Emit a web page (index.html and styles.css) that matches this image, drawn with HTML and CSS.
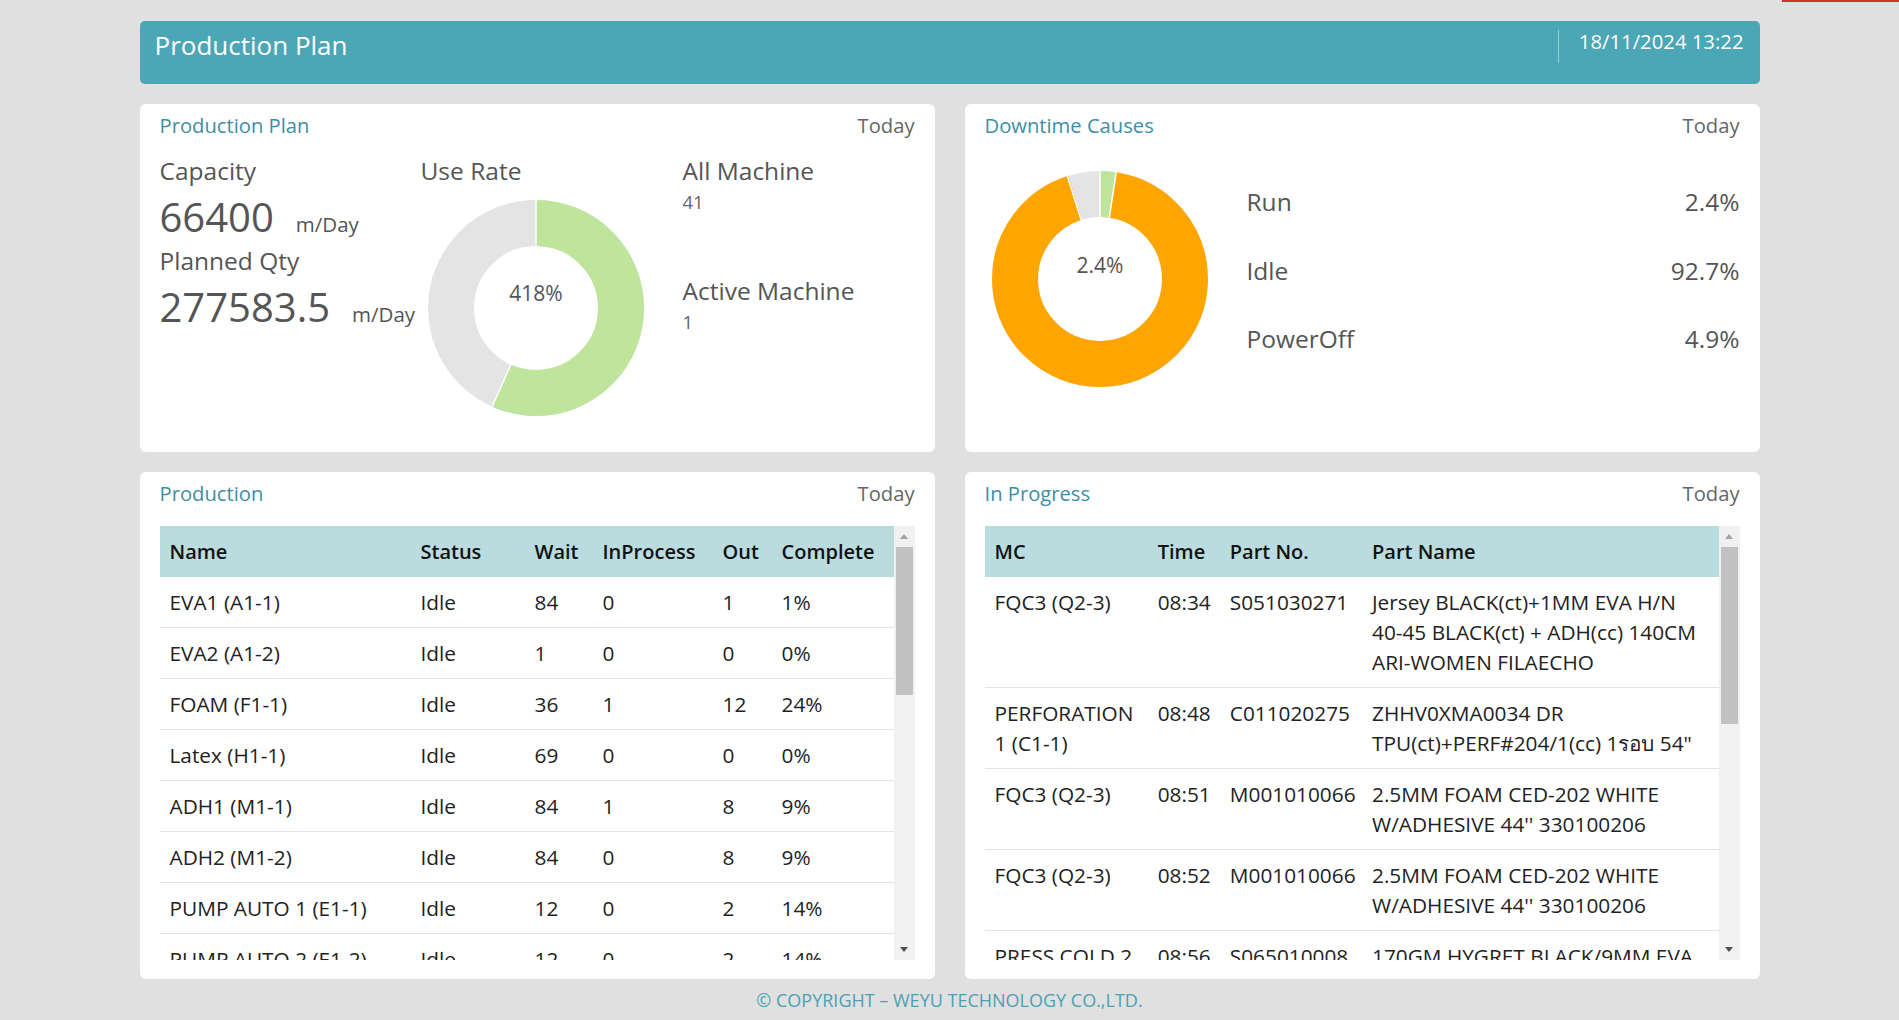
FILE: index.html
```html
<!DOCTYPE html>
<html lang="en">
<head>
<meta charset="utf-8">
<title>Production Plan</title>
<link rel="stylesheet" href="styles.css">
</head>
<body>
<div class="loadbar"></div>
<div class="page">
  <header class="topbar">
    <div class="topbar-title">Production Plan</div>
    <div class="topbar-date">18/11/2024 13:22</div>
  </header>

  <main class="grid">
    <section class="card card-top">
      <div class="card-head">
        <span class="card-title">Production Plan</span>
        <span class="card-when">Today</span>
      </div>
      <div class="plan-body">
        <div class="plan-col">
          <div class="label">Capacity</div>
          <div class="bignum">66400<span class="unit">m/Day</span></div>
          <div class="label">Planned Qty</div>
          <div class="bignum">277583.5<span class="unit">m/Day</span></div>
        </div>
        <div class="plan-col">
          <div class="label">Use Rate</div>
          <svg class="donut donut-use" width="220" height="220" viewBox="0 0 220 220">
            <circle cx="110" cy="110" r="85" fill="none" stroke="#e4e4e4" stroke-width="46"/>
            <circle cx="110" cy="110" r="85" fill="none" stroke="#bfe49b" stroke-width="46" stroke-dasharray="302.6 534.07" transform="rotate(-90 110 110)"/>
            <line x1="110" y1="48" x2="110" y2="1" stroke="#fff" stroke-width="1.5"/>
            <line x1="84.8" y1="166.6" x2="66.1" y2="208.7" stroke="#fff" stroke-width="1.5"/>
            <text x="110" y="97.5" class="donut-text" text-anchor="middle" dominant-baseline="middle">418%</text>
          </svg>
        </div>
        <div class="plan-col">
          <div class="label">All Machine</div>
          <div class="subnum">41</div>
          <div class="label label-gap">Active Machine</div>
          <div class="subnum">1</div>
        </div>
      </div>
    </section>

    <section class="card card-top">
      <div class="card-head">
        <span class="card-title">Downtime Causes</span>
        <span class="card-when">Today</span>
      </div>
      <div class="down-body">
        <svg class="donut donut-down" width="220" height="220" viewBox="0 0 220 220">
          <circle cx="110" cy="110" r="85" fill="none" stroke="#e4e4e4" stroke-width="46"/>
          <circle cx="110" cy="110" r="85" fill="none" stroke="#ffa500" stroke-width="46" stroke-dasharray="495.08 534.07" stroke-dashoffset="-12.82" transform="rotate(-90 110 110)"/>
          <circle cx="110" cy="110" r="85" fill="none" stroke="#bfe49b" stroke-width="46" stroke-dasharray="12.82 534.07" transform="rotate(-90 110 110)"/>
          <line x1="110" y1="48" x2="110" y2="1" stroke="#fff" stroke-width="1.5"/>
          <line x1="119.3" y1="48.7" x2="126.2" y2="3.2" stroke="#fff" stroke-width="1.5"/>
          <line x1="91.2" y1="50.9" x2="77.3" y2="7.1" stroke="#fff" stroke-width="1.5"/>
          <text x="110" y="98" class="donut-text" text-anchor="middle" dominant-baseline="middle">2.4%</text>
        </svg>
        <div class="legend">
          <div class="legend-row"><span>Run</span><span>2.4%</span></div>
          <div class="legend-row"><span>Idle</span><span>92.7%</span></div>
          <div class="legend-row"><span>PowerOff</span><span>4.9%</span></div>
        </div>
      </div>
    </section>

    <section class="card card-bottom">
      <div class="card-head">
        <span class="card-title">Production</span>
        <span class="card-when">Today</span>
      </div>
      <div class="table-wrap">
        <div class="viewport">
          <table class="tbl tbl-prod">
            <colgroup><col class="c-name"><col class="c-status"><col class="c-wait"><col class="c-inproc"><col class="c-out"><col class="c-complete"></colgroup>
            <thead><tr><th>Name</th><th>Status</th><th>Wait</th><th>InProcess</th><th>Out</th><th>Complete</th></tr></thead>
            <tbody>
              <tr><td>EVA1 (A1-1)</td><td>Idle</td><td>84</td><td>0</td><td>1</td><td>1%</td></tr>
              <tr><td>EVA2 (A1-2)</td><td>Idle</td><td>1</td><td>0</td><td>0</td><td>0%</td></tr>
              <tr><td>FOAM (F1-1)</td><td>Idle</td><td>36</td><td>1</td><td>12</td><td>24%</td></tr>
              <tr><td>Latex (H1-1)</td><td>Idle</td><td>69</td><td>0</td><td>0</td><td>0%</td></tr>
              <tr><td>ADH1 (M1-1)</td><td>Idle</td><td>84</td><td>1</td><td>8</td><td>9%</td></tr>
              <tr><td>ADH2 (M1-2)</td><td>Idle</td><td>84</td><td>0</td><td>8</td><td>9%</td></tr>
              <tr><td>PUMP AUTO 1 (E1-1)</td><td>Idle</td><td>12</td><td>0</td><td>2</td><td>14%</td></tr>
              <tr><td>PUMP AUTO 2 (E1-2)</td><td>Idle</td><td>12</td><td>0</td><td>2</td><td>14%</td></tr>
            </tbody>
          </table>
        </div>
        <div class="sbar">
          <div class="sbtn"><span class="arr-up"></span></div>
          <div class="strack"><div class="thumb thumb-prod"></div></div>
          <div class="sbtn"><span class="arr-down"></span></div>
        </div>
      </div>
    </section>

    <section class="card card-bottom">
      <div class="card-head">
        <span class="card-title">In Progress</span>
        <span class="card-when">Today</span>
      </div>
      <div class="table-wrap">
        <div class="viewport">
          <table class="tbl tbl-prog">
            <colgroup><col class="c-mc"><col class="c-time"><col class="c-partno"><col class="c-partname"></colgroup>
            <thead><tr><th>MC</th><th>Time</th><th>Part No.</th><th>Part Name</th></tr></thead>
            <tbody>
              <tr><td>FQC3 (Q2-3)</td><td>08:34</td><td>S051030271</td><td>Jersey BLACK(ct)+1MM EVA H/N 40-45 BLACK(ct) + ADH(cc) 140CM ARI-WOMEN FILAECHO</td></tr>
              <tr><td>PERFORATION 1 (C1-1)</td><td>08:48</td><td>C011020275</td><td>ZHHV0XMA0034 DR TPU(ct)+PERF#204/1(cc) 1รอบ 54"</td></tr>
              <tr><td>FQC3 (Q2-3)</td><td>08:51</td><td>M001010066</td><td>2.5MM FOAM CED-202 WHITE W/ADHESIVE 44'' 330100206</td></tr>
              <tr><td>FQC3 (Q2-3)</td><td>08:52</td><td>M001010066</td><td>2.5MM FOAM CED-202 WHITE W/ADHESIVE 44'' 330100206</td></tr>
              <tr><td>PRESS COLD 2</td><td>08:56</td><td>S065010008</td><td>170GM HYGRET BLACK/9MM EVA</td></tr>
            </tbody>
          </table>
        </div>
        <div class="sbar">
          <div class="sbtn"><span class="arr-up"></span></div>
          <div class="strack"><div class="thumb thumb-prog"></div></div>
          <div class="sbtn"><span class="arr-down"></span></div>
        </div>
      </div>
    </section>
  </main>

  <footer class="footer">© COPYRIGHT – WEYU TECHNOLOGY CO.,LTD.</footer>
</div>
</body>
</html>
```

FILE: styles.css
```css
* { box-sizing: border-box; }

html, body {
  margin: 0;
  padding: 0;
}

body {
  background: #e0e0e0;
  font-family: "Open Sans", "Noto Sans", "DejaVu Sans", sans-serif;
  color: #555;
  width: 1899px;
  height: 1020px;
  overflow: hidden;
}

.loadbar {
  position: absolute;
  top: 0;
  right: 0;
  width: 117px;
  height: 2px;
  background: #d32f2f;
}

.page {
  width: 1620px;
  margin: 0 auto;
  padding-top: 21px;
}

/* Top bar */
.topbar {
  height: 63px;
  background: #4ba6b6;
  border-radius: 5px;
  color: #fff;
  display: flex;
  justify-content: space-between;
  align-items: flex-start;
  padding: 0 16px 0 15px;
}

.topbar-title {
  font-size: 26px;
  line-height: 32px;
  padding-top: 8px;
}

.topbar-date {
  font-size: 20.3px;
  line-height: 22px;
  margin-top: 9px;
  padding-left: 20px;
  border-left: 1px solid rgba(255, 255, 255, 0.45);
  height: 33px;
  padding-top: 0;
}

/* Grid */
.grid {
  margin-top: 20px;
  display: grid;
  grid-template-columns: 795px 795px;
  grid-template-rows: 348px 507px;
  column-gap: 30px;
  row-gap: 20px;
}

.card {
  background: #fff;
  border-radius: 6px;
  padding: 9px 20px 19px 20px;
  min-width: 0;
}

.card-head {
  display: flex;
  justify-content: space-between;
  font-size: 20.2px;
  line-height: 24px;
}

.card-title { color: #3d8fa7; }
.card-when { color: #666; }

/* Production plan */
.plan-body {
  display: grid;
  grid-template-columns: 261px 262px 1fr;
  margin-top: 19px;
}

.plan-col {
  display: flex;
  flex-direction: column;
}

.label {
  font-size: 24.5px;
  line-height: 29px;
  color: #555;
}

.bignum {
  font-size: 40px;
  line-height: 50px;
  color: #555;
  margin: 7px 0 4px;
}

.unit {
  font-size: 20.5px;
  line-height: 20px;
  margin-left: 22px;
}

.subnum {
  font-size: 18.5px;
  line-height: 22px;
  color: #666;
  margin-top: 6px;
}

.label-gap { margin-top: 63px; }

.donut { display: block; }

.donut-use {
  margin-top: 13px;
  margin-left: 5px;
}

.donut-text {
  font-family: "Open Sans", "Noto Sans", sans-serif;
  font-size: 21px;
  fill: #555;
}

/* Downtime */
.down-body {
  display: flex;
  margin-top: 32px;
}

.donut-down {
  margin-left: 5px;
  flex: none;
}

.legend {
  flex: 1;
  margin-left: 37px;
  padding-top: 18px;
  display: flex;
  flex-direction: column;
  gap: 39.5px;
}

.legend-row {
  display: flex;
  justify-content: space-between;
  font-size: 24.5px;
  line-height: 29px;
  color: #555;
}

/* Tables */
.table-wrap {
  margin-top: 21px;
  height: 434px;
  display: flex;
}

.viewport {
  flex: 1;
  overflow: hidden;
  min-width: 0;
}

.tbl {
  width: 100%;
  table-layout: fixed;
  border-collapse: collapse;
  font-size: 20.8px;
  color: #222;
}

.tbl th {
  background: #badcdf;
  color: #111;
  font-weight: 600;
  font-size: 20px;
  text-align: left;
  height: 51px;
  padding: 0 10px;
  line-height: 30px;
}

.tbl td {
  padding: 10px;
  line-height: 30px;
  vertical-align: top;
  border-bottom: 1px solid #dde6e7;
}

.c-name { width: 251px; }
.c-status { width: 114px; }
.c-wait { width: 68px; }
.c-inproc { width: 120px; }
.c-out { width: 59px; }
.c-complete { width: 122px; }

.c-mc { width: 163px; }
.c-time { width: 72px; }
.c-partno { width: 142px; }
.c-partname { width: 356px; }

/* Fake scrollbar */
.sbar {
  width: 21px;
  flex: none;
  background: #f1f1f1;
  display: flex;
  flex-direction: column;
}

.sbtn {
  height: 21px;
  flex: none;
  display: flex;
  align-items: center;
  justify-content: center;
}

.arr-up {
  width: 0;
  height: 0;
  border-left: 4.5px solid transparent;
  border-right: 4.5px solid transparent;
  border-bottom: 5px solid #a3a3a3;
}

.arr-down {
  width: 0;
  height: 0;
  border-left: 4.5px solid transparent;
  border-right: 4.5px solid transparent;
  border-top: 5px solid #505050;
}

.strack {
  flex: 1;
  padding: 0 2px;
}

.thumb {
  background: #c1c1c1;
  width: 17px;
}

.thumb-prod { height: 148px; }
.thumb-prog { height: 177px; }

/* Footer */
.footer {
  text-align: center;
  color: #4ba0b4;
  font-size: 18px;
  line-height: 24px;
  margin-top: 9px;
}
```
